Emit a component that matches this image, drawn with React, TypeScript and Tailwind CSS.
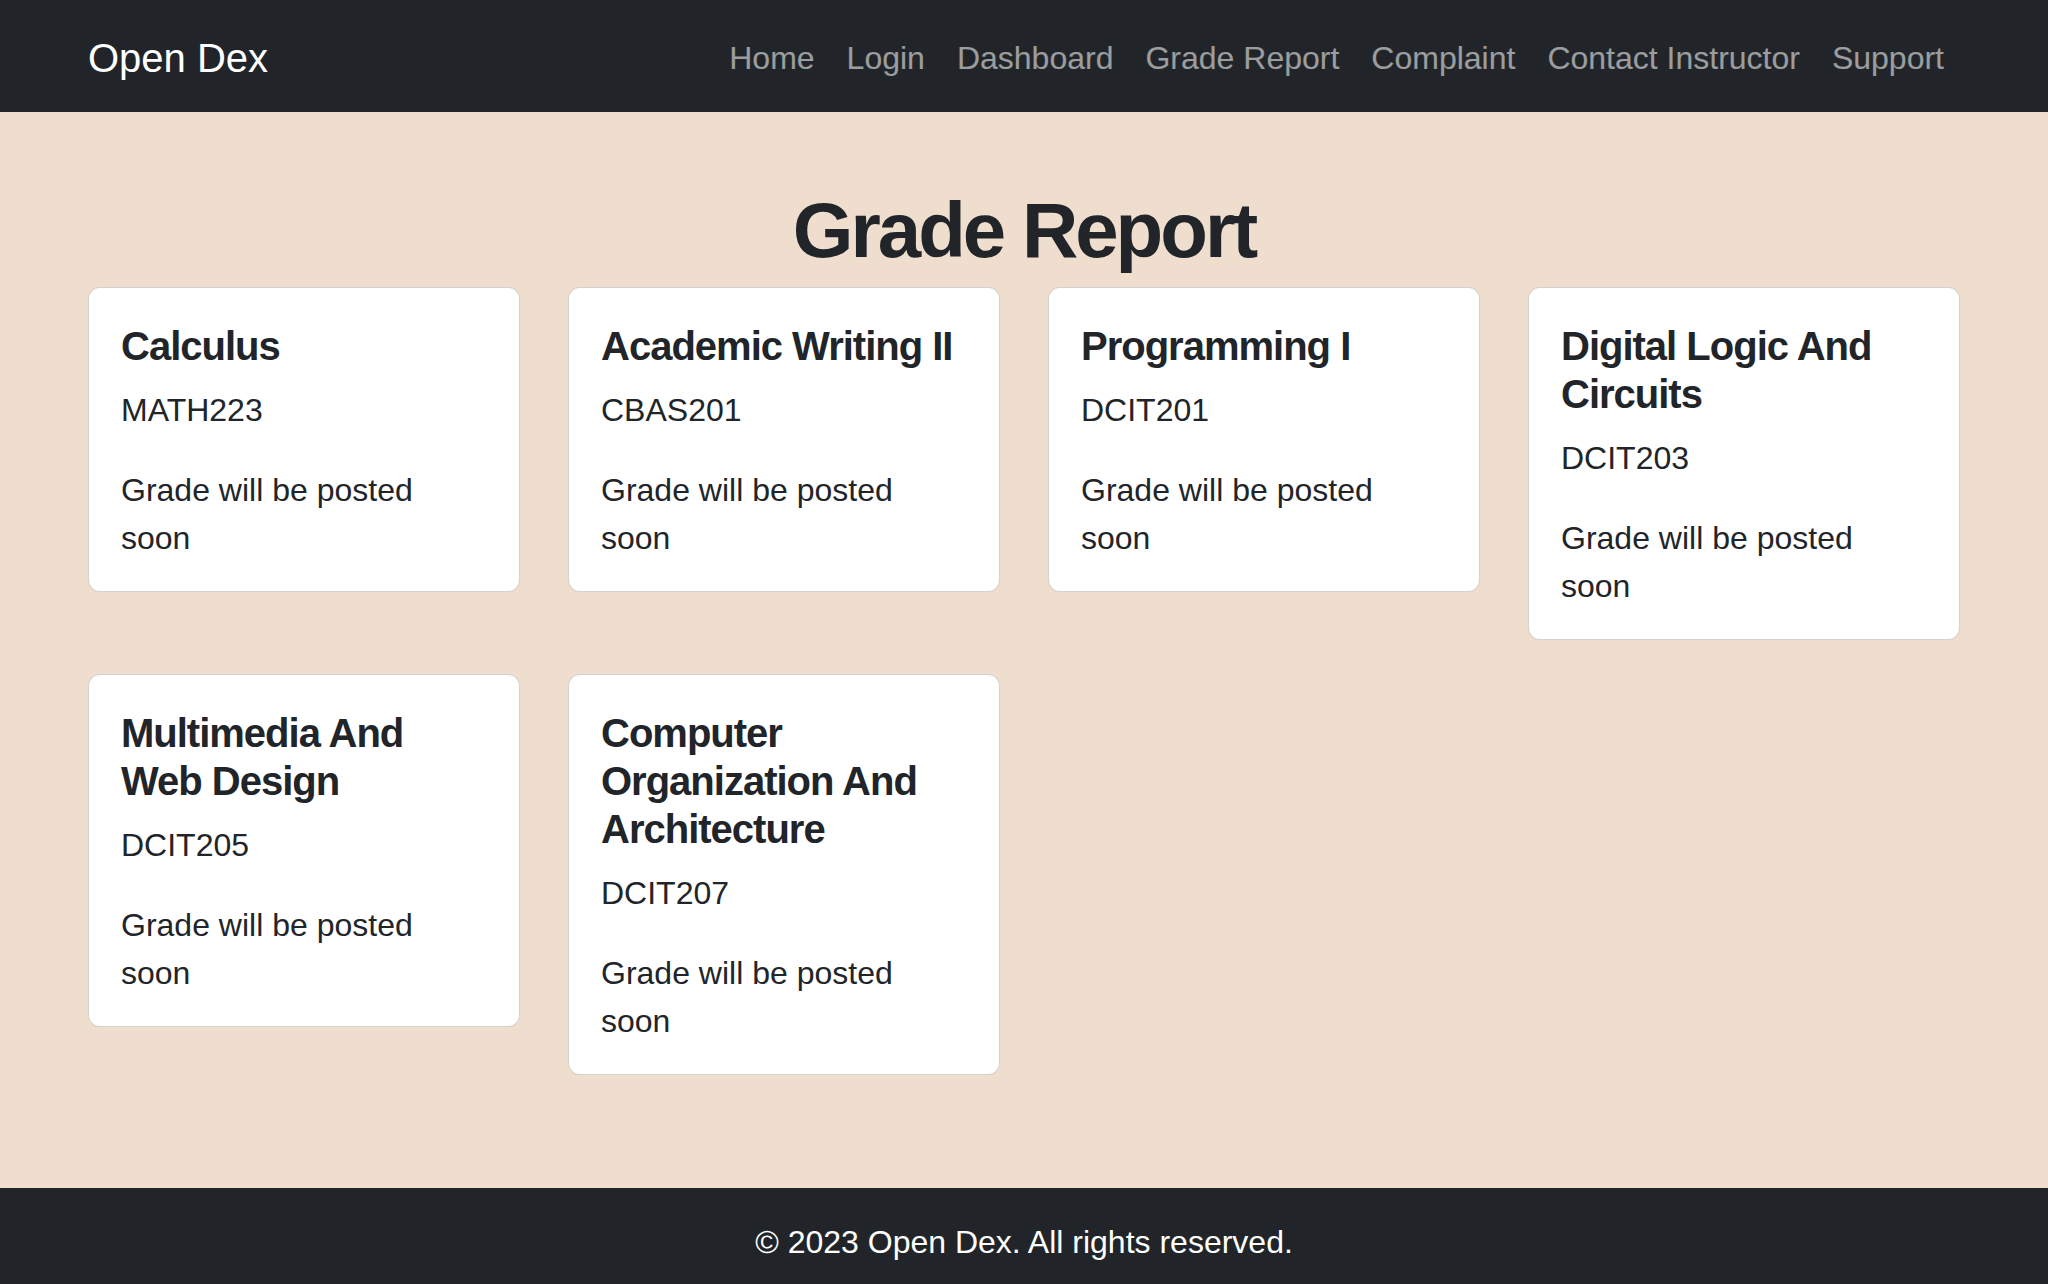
import React from "react";

const links = ["Home", "Login", "Dashboard", "Grade Report", "Complaint", "Contact Instructor", "Support"];

const courses = [
  { title: "Calculus", code: "MATH223" },
  { title: "Academic Writing II", code: "CBAS201" },
  { title: "Programming I", code: "DCIT201" },
  { title: "Digital Logic And Circuits", code: "DCIT203" },
  { title: "Multimedia And Web Design", code: "DCIT205" },
  { title: "Computer Organization And Architecture", code: "DCIT207" },
];

const CourseCard = ({ title, code }: { title: string; code: string }) => (
  <div className="rounded-[12px] border border-[rgba(0,0,0,0.175)] bg-white px-[32px] pt-[34px] pb-[29px]">
    <h5 className="mb-[16px] text-[40px] leading-[48px] font-bold tracking-[-1px]">{title}</h5>
    <p className="mb-[32px] text-[32px] leading-[48px]">{code}</p>
    <p className="pr-2 text-[32px] leading-[48px]">Grade will be posted soon</p>
  </div>
);

export default function App() {
  return (
    <div
      className="flex min-h-screen flex-col bg-[#efdecd] text-[#212529]"
      style={{ fontFamily: '"Liberation Sans", Arial, sans-serif' }}
    >
      <nav className="bg-[#212529]">
        <div className="mx-auto flex h-[112px] w-[1920px] items-center justify-between px-[24px] pt-[4px]">
          <a className="text-[40px] leading-[60px] text-white">Open Dex</a>
          <ul className="flex">
            {links.map((l) => (
              <li key={l}>
                <a className="block px-[16px] text-[32px] leading-[48px] text-white/55">{l}</a>
              </li>
            ))}
          </ul>
        </div>
      </nav>

      <main className="flex-1 pt-[70px] pb-[80px]">
        <div className="mx-auto w-[1920px] px-[24px]">
          <h1 className="mb-[9px] text-center text-[78px] leading-[96px] font-bold tracking-[-3px]">
            Grade Report
          </h1>
          <div className="grid grid-cols-4 items-start gap-x-[48px] gap-y-[34px]">
            {courses.map((c) => (
              <CourseCard key={c.code} title={c.title} code={c.code} />
            ))}
          </div>
        </div>
      </main>

      <footer className="bg-[#212529] pt-[30px] pb-[18px] text-center text-[32px] leading-[48px] text-white">
        © 2023 Open Dex. All rights reserved.
      </footer>
    </div>
  );
}
